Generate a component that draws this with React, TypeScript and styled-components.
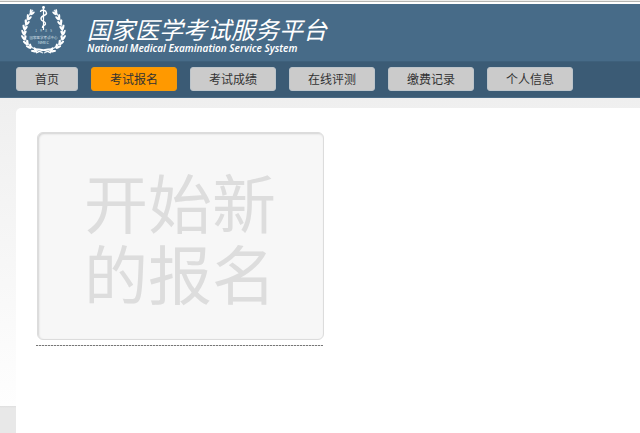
import React from 'react';
import styled, { createGlobalStyle } from 'styled-components';

const GlobalStyle = createGlobalStyle`
  * { box-sizing: border-box; }
  html, body, #root { min-height: 100vh; }
  body {
    margin: 0;
    background: #fff;
    font-family: "Noto Sans CJK SC", sans-serif;
  }
`;

const Page = styled.div`
  display: flex;
  flex-direction: column;
  min-height: 100vh;
`;

const TopEdge = styled.div`
  height: 4px;
  background: linear-gradient(#ededeb 0 1px, #b5b5b2 1px 2px, #fff 2px);
`;

const Header = styled.header`
  display: flex;
  align-items: flex-start;
  gap: 20px;
  height: 57px;
  padding: 1px 20px 0;
  background: #476b88;
  color: #fff;
`;

const Emblem = styled.svg`
  flex: none;
  width: 47px;
  height: 50px;
`;

const Brand = styled.div`
  padding-top: 10px;
  font-style: italic;
  white-space: nowrap;
`;

const Title = styled.h1`
  margin: 0;
  font-size: 24px;
  line-height: 28px;
  font-weight: 400;
`;

const Subtitle = styled.p`
  margin: 0;
  font-family: "Noto Sans", sans-serif;
  font-size: 10px;
  line-height: 10px;
  font-weight: 600;
`;

const Nav = styled.nav`
  display: flex;
  gap: 13px;
  padding: 5px 16px 6px;
  background: #3b5b75;
  border-bottom: 1px solid #4a6b86;
  border-top: 1px solid #3e607b;
`;

const NavLink = styled.a<{ $active?: boolean }>`
  height: 24px;
  padding: 0 18px;
  border: 1px solid ${(p) => (p.$active ? '#f39a0b' : '#bcc4ca')};
  border-radius: 3px;
  background: ${(p) => (p.$active ? '#ff9900' : '#cbcbcb')};
  color: #333;
  font-size: 12px;
  line-height: 22px;
  text-decoration: none;
  white-space: nowrap;
`;

const Body = styled.div`
  flex: 1;
  display: flex;
  flex-direction: column;
  padding: 10px 0 0 16px;
  background:
    linear-gradient(#efefef, #fefefe) 0 0 / 100% 308px no-repeat,
    linear-gradient(#dedede, #e8e8e8 2px) 0 308px / 100% 27px no-repeat,
    #fff;
`;

const Panel = styled.main`
  flex: 1;
  padding: 24px 20px;
  border-top-left-radius: 5px;
  background: #fff;
`;

const Entry = styled.section`
  width: 287px;
  padding-bottom: 6px;
  background: repeating-linear-gradient(90deg, #777 0 2px, #ddd 2px 3px) 0 100% / 100% 1px no-repeat;
`;

const StartButton = styled.button`
  display: block;
  width: 287px;
  height: 208px;
  margin-left: 1px;
  padding: 0 40px 0 46px;
  border: 1px solid #dcdcdc;
  border-radius: 6px;
  background: #f7f7f7;
  box-shadow: inset 1px 1px 2px #d2d2d2;
  color: #ddd;
  font-family: inherit;
  font-size: 64px;
  line-height: 71px;
  text-align: left;
  cursor: pointer;
`;

const leaves = [
  [12, 7, 24], [9, 12, 22], [7, 17, 16], [5, 22, 8], [4, 27, 0], [4, 32, -10], [6, 37, -24], [9, 41, -38], [14, 45, -56],
];

const Branch = () => (
  <g>
    <path d="M13 5C3 16 2 32 9 40C13 44 17 45 23 48" fill="none" stroke="#dfe8ef" strokeWidth="1.2" />
    {leaves.map(([x, y, a]) => (
      <g key={y} transform={`translate(${x} ${y}) rotate(${a})`} fill="#fff">
        <ellipse cx="-1.2" cy="0" rx="1.1" ry="3" transform="rotate(-24)" />
        <ellipse cx="1.4" cy="0.4" rx="1.1" ry="2.7" transform="rotate(28)" />
      </g>
    ))}
  </g>
);

const navItems = ['首页', '考试报名', '考试成绩', '在线评测', '缴费记录', '个人信息'];

export default function App() {
  return (
    <>
      <GlobalStyle />
      <Page>
        <TopEdge />
        <Header>
          <Emblem viewBox="0 0 47 50" role="img" aria-label="国家医学考试中心">
            <Branch />
            <g transform="translate(47 0) scale(-1 1)">
              <Branch />
            </g>
            <path d="M14 44C20 44 26 45 31 48M33 44C27 44 21 45 16 48" fill="none" stroke="#fff" strokeWidth="1.3" />
            <path d="M23.5 1V25" stroke="#fff" strokeWidth="1.2" />
            <circle cx="23.5" cy="2.5" r="1.4" fill="#fff" />
            <path
              d="M20.5 7C21 4 26 5 26.5 8C27 11 20.5 10 21 14C21.5 17 26 16 25.5 19C25 21 22 20 22.5 23"
              fill="none"
              stroke="#fff"
              strokeWidth="1.4"
            />
            <g fill="#d5e0e9" fontFamily="Noto Sans CJK SC, sans-serif" textAnchor="middle">
              <text x="16" y="27" fontSize="3">1</text>
              <text x="21" y="27" fontSize="3">9</text>
              <text x="26" y="27" fontSize="3">8</text>
              <text x="31" y="27" fontSize="3">5</text>
              <text x="23.5" y="34" fontSize="3.5">国家医学考试中心</text>
              <text x="23.5" y="39" fontSize="4">NMEC</text>
            </g>
          </Emblem>
          <Brand>
            <Title>国家医学考试服务平台</Title>
            <Subtitle>National Medical Examination Service System</Subtitle>
          </Brand>
        </Header>
        <Nav>
          {navItems.map((label) => (
            <NavLink key={label} href="#" $active={label === '考试报名'}>
              {label}
            </NavLink>
          ))}
        </Nav>
        <Body>
          <Panel>
            <Entry>
              <StartButton type="button">开始新的报名</StartButton>
            </Entry>
          </Panel>
        </Body>
      </Page>
    </>
  );
}
